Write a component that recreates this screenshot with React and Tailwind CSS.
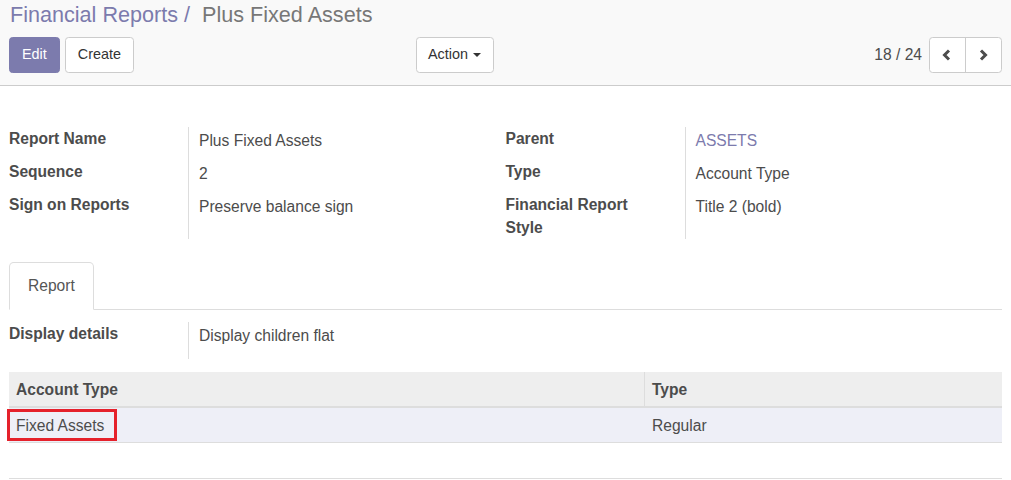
import React from "react";

const font = { fontFamily: '"Liberation Sans", Arial, Helvetica, sans-serif' };

function Chevron({ dir }) {
  return (
    <svg width="10" height="12" viewBox="0 0 10 12">
      <polyline
        points={dir === "left" ? "7,1.5 2.5,6 7,10.5" : "3,1.5 7.5,6 3,10.5"}
        fill="none"
        stroke="#4c4c4c"
        strokeWidth="3"
      />
    </svg>
  );
}

function FieldGroup({ rows }) {
  return (
    <div className="flex flex-1">
      <div className="w-[179px] shrink-0 pr-[43px]">
        {rows.map((r) => (
          <div key={r.label} className="min-h-[33px] font-bold leading-[23px] text-[#4c4c4c]">
            {r.label}
          </div>
        ))}
      </div>
      <div className="flex-1 border-l border-[#ddd] pl-[10px]">
        {rows.map((r) => (
          <div
            key={r.label}
            className={`pt-[1.5px] leading-[23px] ${r.label.length > 16 ? "min-h-[46px]" : "h-[33px]"} ${
              r.link ? "text-[#7c7bad]" : "text-[#4c4c4c]"
            }`}
          >
            {r.value}
          </div>
        ))}
      </div>
    </div>
  );
}

export default function App() {
  return (
    <div className="w-[1011px] h-[480px] overflow-hidden bg-white text-[15.6px] text-[#4c4c4c]" style={font}>
      {/* control panel */}
      <div className="bg-[#f9f9f9] border-b border-[#ccc] px-[9px] pt-[3px] pb-[12px]">
        <div className="h-[24px] leading-[24px] text-[21.6px] pl-[1px]">
          <span className="text-[#7c7bad]">Financial Reports</span>
          <span className="text-[#7c7bad] px-[6px]">/</span>
          <span className="text-[#777]"> Plus Fixed Assets</span>
        </div>
        <div className="mt-[10px] grid grid-cols-2 h-[36px]">
          <div className="flex justify-between pr-[12px]">
            <div className="flex gap-[5px]">
              <button className="h-[36px] px-[12px] rounded-[3.6px] border border-[#7c7bad] bg-[#7c7bad] text-white text-[14.4px]">
                Edit
              </button>
              <button className="h-[36px] px-[12px] rounded-[3.6px] border border-[#ccc] bg-white text-[#333] text-[14.4px]">
                Create
              </button>
            </div>
            <button className="h-[36px] px-[11.5px] rounded-[3.6px] border border-[#ccc] bg-white text-[#333] text-[14.4px] flex items-center">
              Action
              <span className="ml-[5px] w-0 h-0 border-x-[4.8px] border-x-transparent border-t-[4.8px] border-t-[#333]" />
            </button>
          </div>
          <div className="flex justify-end items-center">
            <span className="mr-[7px] text-[#4c4c4c]">18 / 24</span>
            <div className="flex h-[36px] border border-[#ccc] rounded-[3.6px] bg-white">
              <button className="w-[35.5px] flex items-center justify-center border-r border-[#ccc]">
                <Chevron dir="left" />
              </button>
              <button className="w-[35.5px] flex items-center justify-center">
                <Chevron dir="right" />
              </button>
            </div>
          </div>
        </div>
      </div>

      {/* form */}
      <div className="px-[9px] pt-[41px]">
        <div className="flex">
          <FieldGroup
            rows={[
              { label: "Report Name", value: "Plus Fixed Assets" },
              { label: "Sequence", value: "2" },
              { label: "Sign on Reports", value: "Preserve balance sign" },
            ]}
          />
          <FieldGroup
            rows={[
              { label: "Parent", value: "ASSETS", link: true },
              { label: "Type", value: "Account Type" },
              { label: "Financial Report Style", value: "Title 2 (bold)" },
            ]}
          />
        </div>

        {/* tabs */}
        <div className="mt-[23px] flex border-b border-[#ddd]">
          <div className="-mb-px px-[18px] py-[12px] leading-[22.3px] bg-white border border-[#ddd] border-b-transparent rounded-t-[4.8px] text-[#555]">
            Report
          </div>
        </div>

        <div className="pt-[12px]">
          <div className="flex h-[37px]">
            <div className="w-[179px] shrink-0 font-bold leading-[23px]">Display details</div>
            <div className="flex-1 border-l border-[#ddd] pl-[10px] pt-[1.5px] leading-[23px]">
              Display children flat
            </div>
          </div>

          {/* one2many list */}
          <div className="mt-[13px]">
            <div className="flex h-[36px] bg-[#eee] border-b-2 border-[#ddd] font-bold">
              <div className="w-[635px] px-[7px] flex items-center">Account Type</div>
              <div className="flex-1 px-[7px] flex items-center border-l border-[#ddd]">Type</div>
            </div>
            <div className="relative flex h-[35px] bg-[#eeeff7] border-b border-[#ddd]">
              <div className="w-[635px] px-[7px] flex items-center">Fixed Assets</div>
              <div className="flex-1 px-[7px] flex items-center border-l border-transparent">Regular</div>
              <div className="absolute left-[-2px] top-[1px] w-[110px] h-[32px] border-[3px] border-[#e5212b]" />
            </div>
            <div className="h-[36px] border-b border-[#ddd]" />
          </div>
        </div>
      </div>
    </div>
  );
}
